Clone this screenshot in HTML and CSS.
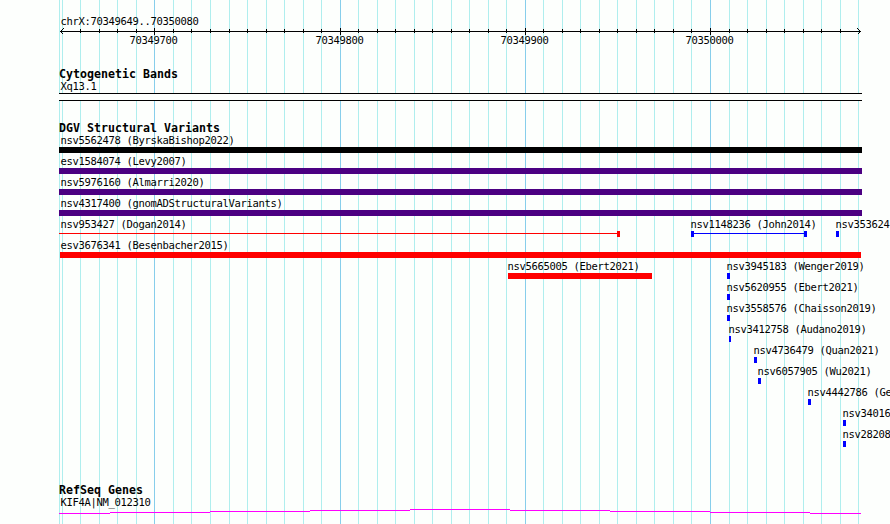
FILE: index.html
```
<!DOCTYPE html>
<html lang="en">
<head>
  <meta charset="UTF-8">
  <title>chrX:70349649..70350080</title>
  <link rel="stylesheet" href="styles.css">
</head>
<body>
  <main class="browser">
    <!-- Grid lines -->
    <svg class="grid" width="890" height="524">
      <path class="minor" d="M59.5 0v524M62.5 0v524M80.5 0v524M99.5 0v524M117.5 0v524M136.5 0v524M173.5 0v524M191.5 0v524M210.5 0v524M229.5 0v524M247.5 0v524M266.5 0v524M284.5 0v524M303.5 0v524M321.5 0v524M358.5 0v524M377.5 0v524M395.5 0v524M414.5 0v524M432.5 0v524M451.5 0v524M469.5 0v524M488.5 0v524M506.5 0v524M543.5 0v524M562.5 0v524M580.5 0v524M599.5 0v524M617.5 0v524M636.5 0v524M654.5 0v524M673.5 0v524M691.5 0v524M729.5 0v524M747.5 0v524M766.5 0v524M784.5 0v524M803.5 0v524M821.5 0v524M840.5 0v524M858.5 0v524"/>
      <path class="major" d="M154.5 0v524M340.5 0v524M525.5 0v524M710.5 0v524"/>
    </svg>

    <!-- Scale -->
    <svg class="track scale" width="890" height="66">
      <text x="60.5" y="25">chrX:70349649..70350080</text>
      <path class="axis" d="M60 31.5H861"/>
      <path class="axis" d="M80.5 29v4M99.5 29v4M117.5 29v4M136.5 29v4M173.5 29v4M191.5 29v4M210.5 29v4M229.5 29v4M247.5 29v4M266.5 29v4M284.5 29v4M303.5 29v4M321.5 29v4M358.5 29v4M377.5 29v4M395.5 29v4M414.5 29v4M432.5 29v4M451.5 29v4M469.5 29v4M488.5 29v4M506.5 29v4M543.5 29v4M562.5 29v4M580.5 29v4M599.5 29v4M617.5 29v4M636.5 29v4M654.5 29v4M673.5 29v4M691.5 29v4M729.5 29v4M747.5 29v4M766.5 29v4M784.5 29v4M803.5 29v4M821.5 29v4M840.5 29v4"/>
      <path class="axis" d="M154.5 28v7M340.5 28v7M525.5 28v7M710.5 28v7"/>
      <path class="axis" d="M63.5 28.5L60.5 31.5L63.5 34.5M857.5 28.5L860.5 31.5L857.5 34.5"/>
      <text x="129.5" y="44">70349700</text>
      <text x="315.5" y="44">70349800</text>
      <text x="500.5" y="44">70349900</text>
      <text x="685.5" y="44">70350000</text>
    </svg>

    <section class="bands">
      <h2>Cytogenetic Bands</h2>
      <svg class="track" width="890" height="40">
        <text x="60.5" y="10">Xq13.1</text>
        <rect class="band" x="59" y="13" width="803" height="8"/>
        <path class="axis" d="M59 13.5H862M59 20.5H862"/>
      </svg>
    </section>

    <section class="variants">
      <h2>DGV Structural Variants</h2>
      <svg class="track" width="890" height="348">
        <text x="60.5" y="10">nsv5562478 (ByrskaBishop2022)</text>
        <rect class="complex" x="59" y="13" width="803" height="6"/>

        <text x="60.5" y="31">esv1584074 (Levy2007)</text>
        <rect class="inversion" x="59" y="34" width="803" height="6"/>

        <text x="60.5" y="52">nsv5976160 (Almarri2020)</text>
        <rect class="inversion" x="59" y="55" width="803" height="6"/>

        <text x="60.5" y="73">nsv4317400 (gnomADStructuralVariants)</text>
        <rect class="inversion" x="59" y="76" width="803" height="6"/>

        <text x="60.5" y="94">nsv953427 (Dogan2014)</text>
        <rect class="loss" x="59" y="99" width="558" height="1"/>
        <rect class="loss" x="617" y="97" width="3" height="6"/>
        <text x="690.5" y="94">nsv1148236 (John2014)</text>
        <rect class="gain" x="691" y="97" width="3" height="6"/>
        <rect class="gain" x="694" y="99" width="110" height="1"/>
        <rect class="gain" x="804" y="97" width="3" height="6"/>
        <text x="835.5" y="94">nsv353624</text>
        <rect class="gain" x="836" y="97" width="3" height="6"/>

        <text x="60.5" y="115">esv3676341 (Besenbacher2015)</text>
        <rect class="loss" x="60" y="118" width="801" height="6"/>

        <text x="507.5" y="136">nsv5665005 (Ebert2021)</text>
        <rect class="loss" x="508" y="139" width="144" height="6"/>
        <text x="726.5" y="136">nsv3945183 (Wenger2019)</text>
        <rect class="gain" x="727" y="139" width="3" height="6"/>

        <text x="726.5" y="157">nsv5620955 (Ebert2021)</text>
        <rect class="gain" x="727" y="160" width="3" height="6"/>

        <text x="726.5" y="178">nsv3558576 (Chaisson2019)</text>
        <rect class="gain" x="727" y="181" width="3" height="6"/>

        <text x="728.5" y="199">nsv3412758 (Audano2019)</text>
        <rect class="gain" x="729" y="202" width="2" height="6"/>

        <text x="753.5" y="220">nsv4736479 (Quan2021)</text>
        <rect class="gain" x="754" y="223" width="3" height="6"/>

        <text x="757.5" y="241">nsv6057905 (Wu2021)</text>
        <rect class="gain" x="758" y="244" width="3" height="6"/>

        <text x="807.5" y="262">nsv4442786 (Ge</text>
        <rect class="gain" x="808" y="265" width="3" height="6"/>

        <text x="842.5" y="283">nsv34016</text>
        <rect class="gain" x="843" y="286" width="3" height="6"/>

        <text x="842.5" y="304">nsv28208</text>
        <rect class="gain" x="843" y="307" width="3" height="6"/>
      </svg>
    </section>

    <section class="genes">
      <h2>RefSeq Genes</h2>
      <svg class="track" width="890" height="28">
        <text x="60.5" y="10">KIF4A|NM_012310</text>
        <path class="gene" d="M59 17.5H110M110 16.5H210M210 15.5H310M310 14.5H410M410 13.5H510M510 14.5H610M610 15.5H710M710 16.5H810M810 17.5H861"/>
      </svg>
    </section>
  </main>
</body>
</html>
```

FILE: styles.css
```
body {
  margin: 0;
  background-color: #fdfffd;
  overflow: hidden;
}

.browser {
  position: relative;
  width: 890px;
  height: 524px;
  overflow: hidden;
  color: #000;
}

.grid {
  position: absolute;
  top: 0;
  left: 0;
  z-index: -1;
  shape-rendering: crispEdges;
}

.minor {
  stroke: #afeeee;
}

.major {
  stroke: #87ceeb;
}

.track {
  display: block;
  shape-rendering: crispEdges;
}

.track text {
  font-family: "DejaVu Sans Mono", monospace;
  font-size: 10.5px;
  letter-spacing: -0.32px;
  white-space: pre;
}

h2 {
  height: 14px;
  margin: 0;
  padding-left: 59px;
  font: bold 11.6px/17px "DejaVu Sans Mono", monospace;
  letter-spacing: 0.02px;
}

.axis {
  fill: none;
  stroke: #000;
}

.band {
  fill: #fdfffd;
}

.complex {
  fill: #000;
}

.inversion {
  fill: #4b0082;
}

.loss {
  fill: #f00;
}

.gain {
  fill: #00f;
}

.gene {
  fill: none;
  stroke: #f0f;
}
```
